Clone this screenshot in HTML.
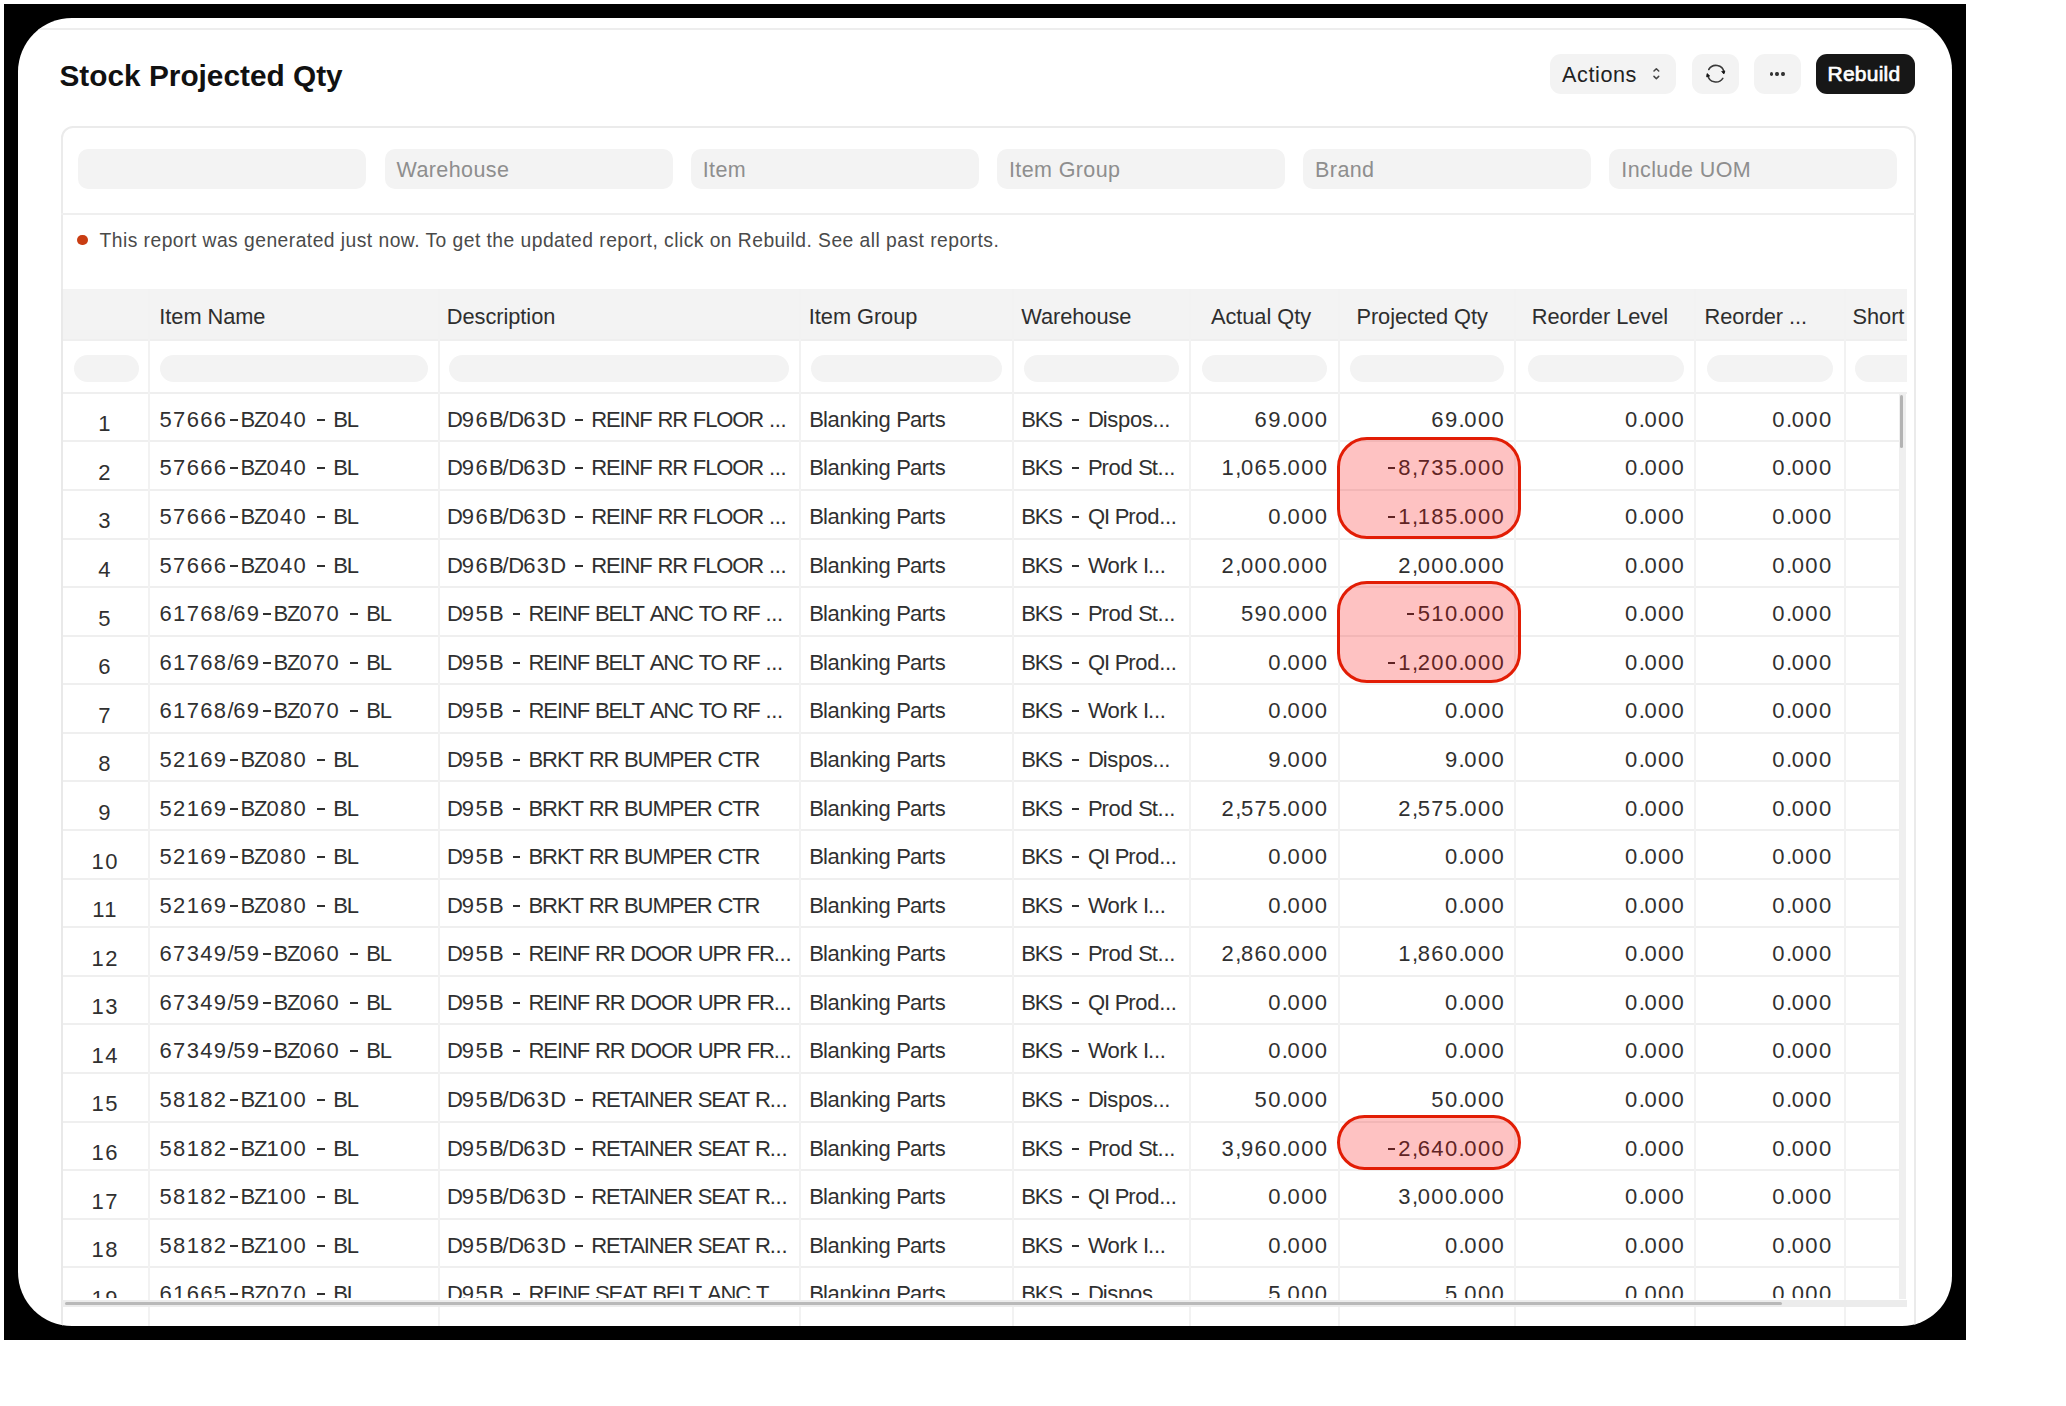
<!DOCTYPE html><html><head><meta charset="utf-8"><style>
*{margin:0;padding:0;box-sizing:border-box}
html,body{width:2066px;height:1406px;background:#fff;overflow:hidden}
body{position:relative;font-family:"Liberation Sans",sans-serif;color:#303030}
.a{position:absolute}
i{font-style:normal}
.d{letter-spacing:1.35px}
.u{letter-spacing:-1.1px}
.h{display:inline-block;width:7.8px;height:2px;background:currentColor;vertical-align:6.3px;margin:0 2.6px 0 2.7px}
.hs{display:inline-block;width:7.4px;height:2px;background:currentColor;vertical-align:6.3px;margin:0 2.7px 0 4.3px}
.m{display:inline-block;width:7px;height:2px;background:currentColor;vertical-align:6.3px;margin-right:3.3px}
.t{position:absolute;white-space:nowrap;line-height:normal;font-size:22px;letter-spacing:-0.3px}
.r{text-align:right}
.hd{position:absolute;white-space:nowrap;line-height:normal;font-size:21.8px;letter-spacing:-0.05px;color:#2e2e2e}
.vl{position:absolute;width:2px;background:#f2f2f2}
.hl{position:absolute;height:2px;background:#efefef}
.fi{position:absolute;background:#f3f3f3;border-radius:10px;height:40px;width:288px}
.fi span{position:absolute;left:12px;top:9px;font-size:21.5px;letter-spacing:0.4px;color:#8e8e8e;white-space:nowrap}
.ci{position:absolute;background:#f3f3f3;border-radius:14px;height:27px;top:355px}
.btn{position:absolute;top:53.5px;height:40.5px;background:#f3f3f3;border-radius:11px}
.box{position:absolute;border:3.6px solid #e21d05;background:rgba(250,0,0,0.24)}
</style></head><body>
<div class="a" style="left:4px;top:4px;width:1962px;height:1336px;background:#000"></div>
<div class="a" style="left:18px;top:18px;width:1934px;height:1308px;background:#fff;border-radius:54px 52px 50px 54px;overflow:hidden">
<div class="a" style="left:-18px;top:-18px;width:2066px;height:1406px">
<div class="a" style="left:0;top:28.2px;width:2066px;height:1.8px;background:#ededed"></div>
<div class="a" style="left:59.5px;top:59px;font-size:29.8px;font-weight:700;color:#111;white-space:nowrap;line-height:normal">Stock Projected Qty</div>
<div class="btn" style="left:1550px;width:126px"></div>
<div class="a" style="left:1562px;top:61.5px;font-size:21.6px;letter-spacing:0.6px;color:#222;line-height:normal;white-space:nowrap">Actions</div>
<svg class="a" style="left:1644px;top:60px" width="26" height="28" viewBox="0 0 26 28"><path d="M10.0 11.0 L12.35 8.7 L14.7 11.0 M10.0 16.4 L12.35 18.7 L14.7 16.4" fill="none" stroke="#454545" stroke-width="1.55" stroke-linecap="round" stroke-linejoin="round"/></svg>
<div class="btn" style="left:1692px;width:47px"></div>
<svg class="a" style="left:1700px;top:58px" width="32" height="32" viewBox="0 0 32 32"><path d="M8.75 11.49 A8.3 8.3 0 0 1 24.06 14.16" fill="none" stroke="#3a3a3a" stroke-width="1.6" stroke-linecap="round"/><path d="M7.75 17.28 A8.3 8.3 0 0 0 22.79 20.33" fill="none" stroke="#3a3a3a" stroke-width="1.6" stroke-linecap="round"/><path d="M21.65 13.55 L24.85 12.91 L23.89 16.03 Z" fill="#151515" stroke="#151515" stroke-width="0.8" stroke-linejoin="round"/><path d="M9.72 17.97 L6.60 18.77 L7.08 15.57 Z" fill="#151515" stroke="#151515" stroke-width="0.8" stroke-linejoin="round"/></svg>
<div class="btn" style="left:1754px;width:46.5px"></div>
<div class="a" style="left:1769.50px;top:71.9px;width:3.3px;height:3.8px;border-radius:50%;background:#333"></div>
<div class="a" style="left:1775.38px;top:71.9px;width:3.3px;height:3.8px;border-radius:50%;background:#333"></div>
<div class="a" style="left:1781.25px;top:71.9px;width:3.3px;height:3.8px;border-radius:50%;background:#333"></div>
<div class="btn" style="left:1815.6px;width:99.5px;background:#171717"></div>
<div class="a" style="left:1827.5px;top:62.2px;font-size:21px;font-weight:400;letter-spacing:0.25px;-webkit-text-stroke:0.7px #fff;color:#fff;line-height:normal;white-space:nowrap">Rebuild</div>
<div class="a" style="left:60.5px;top:126px;width:1855px;height:1260px;border:2px solid #ebebeb;border-radius:12px"></div>
<div class="fi" style="left:78.3px;top:149px"><span></span></div>
<div class="fi" style="left:384.5px;top:149px"><span>Warehouse</span></div>
<div class="fi" style="left:690.7px;top:149px"><span>Item</span></div>
<div class="fi" style="left:996.9px;top:149px"><span>Item Group</span></div>
<div class="fi" style="left:1303.1px;top:149px"><span>Brand</span></div>
<div class="fi" style="left:1609.3px;top:149px"><span>Include UOM</span></div>
<div class="hl" style="left:61px;top:212.5px;width:1854px"></div>
<div class="a" style="left:77px;top:234.5px;width:10.5px;height:10.5px;border-radius:50%;background:#c93d12"></div>
<div class="a" style="left:99.5px;top:230.1px;font-size:19.3px;letter-spacing:0.46px;color:#4a4a4a;white-space:nowrap;line-height:normal">This report was generated just now. To get the updated report, click on Rebuild. See all past reports.</div>
<div class="a" style="left:61.6px;top:288.7px;width:1845px;height:50.5px;background:#f3f3f3"></div>
<div class="hl" style="left:61.6px;top:339px;width:1845px"></div>
<div class="hl" style="left:61.6px;top:391.5px;width:1845px"></div>
<div class="hl" style="left:61.6px;top:440.38px;width:1838px"></div>
<div class="hl" style="left:61.6px;top:488.96px;width:1838px"></div>
<div class="hl" style="left:61.6px;top:537.54px;width:1838px"></div>
<div class="hl" style="left:61.6px;top:586.12px;width:1838px"></div>
<div class="hl" style="left:61.6px;top:634.70px;width:1838px"></div>
<div class="hl" style="left:61.6px;top:683.28px;width:1838px"></div>
<div class="hl" style="left:61.6px;top:731.86px;width:1838px"></div>
<div class="hl" style="left:61.6px;top:780.44px;width:1838px"></div>
<div class="hl" style="left:61.6px;top:829.02px;width:1838px"></div>
<div class="hl" style="left:61.6px;top:877.60px;width:1838px"></div>
<div class="hl" style="left:61.6px;top:926.18px;width:1838px"></div>
<div class="hl" style="left:61.6px;top:974.76px;width:1838px"></div>
<div class="hl" style="left:61.6px;top:1023.34px;width:1838px"></div>
<div class="hl" style="left:61.6px;top:1071.92px;width:1838px"></div>
<div class="hl" style="left:61.6px;top:1120.50px;width:1838px"></div>
<div class="hl" style="left:61.6px;top:1169.08px;width:1838px"></div>
<div class="hl" style="left:61.6px;top:1217.66px;width:1838px"></div>
<div class="hl" style="left:61.6px;top:1266.24px;width:1838px"></div>
<div class="vl" style="left:60.60px;top:288.7px;height:1040px;background:#e9e9e9"></div>
<div class="vl" style="left:147.70px;top:288.7px;height:1040px"></div>
<div class="vl" style="left:437.60px;top:288.7px;height:1040px"></div>
<div class="vl" style="left:799.20px;top:288.7px;height:1040px"></div>
<div class="vl" style="left:1011.50px;top:288.7px;height:1040px"></div>
<div class="vl" style="left:1189.40px;top:288.7px;height:1040px"></div>
<div class="vl" style="left:1337.70px;top:288.7px;height:1040px"></div>
<div class="vl" style="left:1514.30px;top:288.7px;height:1040px"></div>
<div class="vl" style="left:1694.40px;top:288.7px;height:1040px"></div>
<div class="vl" style="left:1843.70px;top:288.7px;height:1040px"></div>
<div class="a" style="left:0;top:0;width:1906.5px;height:1406px;overflow:hidden">
<div class="hd" style="left:159.3px;top:304.3px">Item Name</div>
<div class="hd" style="left:446.8px;top:304.3px">Description</div>
<div class="hd" style="left:808.8px;top:304.3px">Item Group</div>
<div class="hd" style="left:1021.2px;top:304.3px">Warehouse</div>
<div class="hd r" style="right:595.5px;top:304.3px">Actual Qty</div>
<div class="hd r" style="right:418.7px;top:304.3px">Projected Qty</div>
<div class="hd r" style="right:238.5px;top:304.3px">Reorder Level</div>
<div class="hd" style="left:1704.6px;top:304.3px">Reorder ...</div>
<div class="hd" style="left:1852.5px;top:304.3px">Short</div>
</div>
<div class="a" style="left:0;top:0;width:1906.5px;height:1406px;overflow:hidden">
<div class="ci" style="left:73.8px;width:64.8px"></div>
<div class="ci" style="left:160px;width:267.6px"></div>
<div class="ci" style="left:449.4px;width:339.6px"></div>
<div class="ci" style="left:811.4px;width:190.4px"></div>
<div class="ci" style="left:1023.7px;width:155.5px"></div>
<div class="ci" style="left:1201.7px;width:125.7px"></div>
<div class="ci" style="left:1350.3px;width:154.0px"></div>
<div class="ci" style="left:1527.5px;width:156.3px"></div>
<div class="ci" style="left:1707px;width:125.5px"></div>
<div class="ci" style="left:1855px;width:65.0px"></div>
</div>
<div class="a" style="left:0;top:393px;width:1898px;height:905px;overflow:hidden">
<div class="t" style="left:61.6px;width:87.1px;text-align:center;top:18.00px"><i class="d">1</i></div>
<div class="t" style="left:159.5px;top:14.00px"><i class="d">57666</i><i class="h"></i><i class="u">BZ</i><i class="d">040</i> <i class="hs"></i> <i class="u">BL</i></div>
<div class="t" style="left:447px;top:14.00px"><i class="u">D</i><i class="d">96</i><i class="u">B</i>/<i class="u">D</i><i class="d">63</i><i class="u">D</i> <i class="hs"></i> <i class="u">REINF</i> <i class="u">RR</i> <i class="u">FLOOR</i> ...</div>
<div class="t" style="left:809.3px;top:14.00px"><i class="u">B</i>lanking <i class="u">P</i>arts</div>
<div class="t" style="left:1021.2px;top:14.00px"><i class="u">BKS</i> <i class="hs"></i> <i class="u">D</i>ispos...</div>
<div class="t r" style="right:569.7px;top:14.00px"><i class="d">69</i>.<i class="d">000</i></div>
<div class="t r" style="right:392.9px;top:14.00px"><i class="d">69</i>.<i class="d">000</i></div>
<div class="t r" style="right:212.8px;top:14.00px"><i class="d">0</i>.<i class="d">000</i></div>
<div class="t r" style="right:65.5px;top:14.00px"><i class="d">0</i>.<i class="d">000</i></div>
<div class="t" style="left:61.6px;width:87.1px;text-align:center;top:67.00px"><i class="d">2</i></div>
<div class="t" style="left:159.5px;top:62.00px"><i class="d">57666</i><i class="h"></i><i class="u">BZ</i><i class="d">040</i> <i class="hs"></i> <i class="u">BL</i></div>
<div class="t" style="left:447px;top:62.00px"><i class="u">D</i><i class="d">96</i><i class="u">B</i>/<i class="u">D</i><i class="d">63</i><i class="u">D</i> <i class="hs"></i> <i class="u">REINF</i> <i class="u">RR</i> <i class="u">FLOOR</i> ...</div>
<div class="t" style="left:809.3px;top:62.00px"><i class="u">B</i>lanking <i class="u">P</i>arts</div>
<div class="t" style="left:1021.2px;top:62.00px"><i class="u">BKS</i> <i class="hs"></i> <i class="u">P</i>rod <i class="u">S</i>t...</div>
<div class="t r" style="right:569.7px;top:62.00px"><i class="d">1</i>,<i class="d">065</i>.<i class="d">000</i></div>
<div class="t r" style="right:392.9px;top:62.00px"><i class="m"></i><i class="d">8</i>,<i class="d">735</i>.<i class="d">000</i></div>
<div class="t r" style="right:212.8px;top:62.00px"><i class="d">0</i>.<i class="d">000</i></div>
<div class="t r" style="right:65.5px;top:62.00px"><i class="d">0</i>.<i class="d">000</i></div>
<div class="t" style="left:61.6px;width:87.1px;text-align:center;top:115.00px"><i class="d">3</i></div>
<div class="t" style="left:159.5px;top:111.00px"><i class="d">57666</i><i class="h"></i><i class="u">BZ</i><i class="d">040</i> <i class="hs"></i> <i class="u">BL</i></div>
<div class="t" style="left:447px;top:111.00px"><i class="u">D</i><i class="d">96</i><i class="u">B</i>/<i class="u">D</i><i class="d">63</i><i class="u">D</i> <i class="hs"></i> <i class="u">REINF</i> <i class="u">RR</i> <i class="u">FLOOR</i> ...</div>
<div class="t" style="left:809.3px;top:111.00px"><i class="u">B</i>lanking <i class="u">P</i>arts</div>
<div class="t" style="left:1021.2px;top:111.00px"><i class="u">BKS</i> <i class="hs"></i> <i class="u">QI</i> <i class="u">P</i>rod...</div>
<div class="t r" style="right:569.7px;top:111.00px"><i class="d">0</i>.<i class="d">000</i></div>
<div class="t r" style="right:392.9px;top:111.00px"><i class="m"></i><i class="d">1</i>,<i class="d">185</i>.<i class="d">000</i></div>
<div class="t r" style="right:212.8px;top:111.00px"><i class="d">0</i>.<i class="d">000</i></div>
<div class="t r" style="right:65.5px;top:111.00px"><i class="d">0</i>.<i class="d">000</i></div>
<div class="t" style="left:61.6px;width:87.1px;text-align:center;top:164.00px"><i class="d">4</i></div>
<div class="t" style="left:159.5px;top:160.00px"><i class="d">57666</i><i class="h"></i><i class="u">BZ</i><i class="d">040</i> <i class="hs"></i> <i class="u">BL</i></div>
<div class="t" style="left:447px;top:160.00px"><i class="u">D</i><i class="d">96</i><i class="u">B</i>/<i class="u">D</i><i class="d">63</i><i class="u">D</i> <i class="hs"></i> <i class="u">REINF</i> <i class="u">RR</i> <i class="u">FLOOR</i> ...</div>
<div class="t" style="left:809.3px;top:160.00px"><i class="u">B</i>lanking <i class="u">P</i>arts</div>
<div class="t" style="left:1021.2px;top:160.00px"><i class="u">BKS</i> <i class="hs"></i> <i class="u">W</i>ork <i class="u">I</i>...</div>
<div class="t r" style="right:569.7px;top:160.00px"><i class="d">2</i>,<i class="d">000</i>.<i class="d">000</i></div>
<div class="t r" style="right:392.9px;top:160.00px"><i class="d">2</i>,<i class="d">000</i>.<i class="d">000</i></div>
<div class="t r" style="right:212.8px;top:160.00px"><i class="d">0</i>.<i class="d">000</i></div>
<div class="t r" style="right:65.5px;top:160.00px"><i class="d">0</i>.<i class="d">000</i></div>
<div class="t" style="left:61.6px;width:87.1px;text-align:center;top:213.00px"><i class="d">5</i></div>
<div class="t" style="left:159.5px;top:208.00px"><i class="d">61768</i>/<i class="d">69</i><i class="h"></i><i class="u">BZ</i><i class="d">070</i> <i class="hs"></i> <i class="u">BL</i></div>
<div class="t" style="left:447px;top:208.00px"><i class="u">D</i><i class="d">95</i><i class="u">B</i> <i class="hs"></i> <i class="u">REINF</i> <i class="u">BELT</i> <i class="u">ANC</i> <i class="u">TO</i> <i class="u">RF</i> ...</div>
<div class="t" style="left:809.3px;top:208.00px"><i class="u">B</i>lanking <i class="u">P</i>arts</div>
<div class="t" style="left:1021.2px;top:208.00px"><i class="u">BKS</i> <i class="hs"></i> <i class="u">P</i>rod <i class="u">S</i>t...</div>
<div class="t r" style="right:569.7px;top:208.00px"><i class="d">590</i>.<i class="d">000</i></div>
<div class="t r" style="right:392.9px;top:208.00px"><i class="m"></i><i class="d">510</i>.<i class="d">000</i></div>
<div class="t r" style="right:212.8px;top:208.00px"><i class="d">0</i>.<i class="d">000</i></div>
<div class="t r" style="right:65.5px;top:208.00px"><i class="d">0</i>.<i class="d">000</i></div>
<div class="t" style="left:61.6px;width:87.1px;text-align:center;top:261.00px"><i class="d">6</i></div>
<div class="t" style="left:159.5px;top:257.00px"><i class="d">61768</i>/<i class="d">69</i><i class="h"></i><i class="u">BZ</i><i class="d">070</i> <i class="hs"></i> <i class="u">BL</i></div>
<div class="t" style="left:447px;top:257.00px"><i class="u">D</i><i class="d">95</i><i class="u">B</i> <i class="hs"></i> <i class="u">REINF</i> <i class="u">BELT</i> <i class="u">ANC</i> <i class="u">TO</i> <i class="u">RF</i> ...</div>
<div class="t" style="left:809.3px;top:257.00px"><i class="u">B</i>lanking <i class="u">P</i>arts</div>
<div class="t" style="left:1021.2px;top:257.00px"><i class="u">BKS</i> <i class="hs"></i> <i class="u">QI</i> <i class="u">P</i>rod...</div>
<div class="t r" style="right:569.7px;top:257.00px"><i class="d">0</i>.<i class="d">000</i></div>
<div class="t r" style="right:392.9px;top:257.00px"><i class="m"></i><i class="d">1</i>,<i class="d">200</i>.<i class="d">000</i></div>
<div class="t r" style="right:212.8px;top:257.00px"><i class="d">0</i>.<i class="d">000</i></div>
<div class="t r" style="right:65.5px;top:257.00px"><i class="d">0</i>.<i class="d">000</i></div>
<div class="t" style="left:61.6px;width:87.1px;text-align:center;top:310.00px"><i class="d">7</i></div>
<div class="t" style="left:159.5px;top:305.00px"><i class="d">61768</i>/<i class="d">69</i><i class="h"></i><i class="u">BZ</i><i class="d">070</i> <i class="hs"></i> <i class="u">BL</i></div>
<div class="t" style="left:447px;top:305.00px"><i class="u">D</i><i class="d">95</i><i class="u">B</i> <i class="hs"></i> <i class="u">REINF</i> <i class="u">BELT</i> <i class="u">ANC</i> <i class="u">TO</i> <i class="u">RF</i> ...</div>
<div class="t" style="left:809.3px;top:305.00px"><i class="u">B</i>lanking <i class="u">P</i>arts</div>
<div class="t" style="left:1021.2px;top:305.00px"><i class="u">BKS</i> <i class="hs"></i> <i class="u">W</i>ork <i class="u">I</i>...</div>
<div class="t r" style="right:569.7px;top:305.00px"><i class="d">0</i>.<i class="d">000</i></div>
<div class="t r" style="right:392.9px;top:305.00px"><i class="d">0</i>.<i class="d">000</i></div>
<div class="t r" style="right:212.8px;top:305.00px"><i class="d">0</i>.<i class="d">000</i></div>
<div class="t r" style="right:65.5px;top:305.00px"><i class="d">0</i>.<i class="d">000</i></div>
<div class="t" style="left:61.6px;width:87.1px;text-align:center;top:358.00px"><i class="d">8</i></div>
<div class="t" style="left:159.5px;top:354.00px"><i class="d">52169</i><i class="h"></i><i class="u">BZ</i><i class="d">080</i> <i class="hs"></i> <i class="u">BL</i></div>
<div class="t" style="left:447px;top:354.00px"><i class="u">D</i><i class="d">95</i><i class="u">B</i> <i class="hs"></i> <i class="u">BRKT</i> <i class="u">RR</i> <i class="u">BUMPER</i> <i class="u">CTR</i></div>
<div class="t" style="left:809.3px;top:354.00px"><i class="u">B</i>lanking <i class="u">P</i>arts</div>
<div class="t" style="left:1021.2px;top:354.00px"><i class="u">BKS</i> <i class="hs"></i> <i class="u">D</i>ispos...</div>
<div class="t r" style="right:569.7px;top:354.00px"><i class="d">9</i>.<i class="d">000</i></div>
<div class="t r" style="right:392.9px;top:354.00px"><i class="d">9</i>.<i class="d">000</i></div>
<div class="t r" style="right:212.8px;top:354.00px"><i class="d">0</i>.<i class="d">000</i></div>
<div class="t r" style="right:65.5px;top:354.00px"><i class="d">0</i>.<i class="d">000</i></div>
<div class="t" style="left:61.6px;width:87.1px;text-align:center;top:407.00px"><i class="d">9</i></div>
<div class="t" style="left:159.5px;top:403.00px"><i class="d">52169</i><i class="h"></i><i class="u">BZ</i><i class="d">080</i> <i class="hs"></i> <i class="u">BL</i></div>
<div class="t" style="left:447px;top:403.00px"><i class="u">D</i><i class="d">95</i><i class="u">B</i> <i class="hs"></i> <i class="u">BRKT</i> <i class="u">RR</i> <i class="u">BUMPER</i> <i class="u">CTR</i></div>
<div class="t" style="left:809.3px;top:403.00px"><i class="u">B</i>lanking <i class="u">P</i>arts</div>
<div class="t" style="left:1021.2px;top:403.00px"><i class="u">BKS</i> <i class="hs"></i> <i class="u">P</i>rod <i class="u">S</i>t...</div>
<div class="t r" style="right:569.7px;top:403.00px"><i class="d">2</i>,<i class="d">575</i>.<i class="d">000</i></div>
<div class="t r" style="right:392.9px;top:403.00px"><i class="d">2</i>,<i class="d">575</i>.<i class="d">000</i></div>
<div class="t r" style="right:212.8px;top:403.00px"><i class="d">0</i>.<i class="d">000</i></div>
<div class="t r" style="right:65.5px;top:403.00px"><i class="d">0</i>.<i class="d">000</i></div>
<div class="t" style="left:61.6px;width:87.1px;text-align:center;top:456.00px"><i class="d">10</i></div>
<div class="t" style="left:159.5px;top:451.00px"><i class="d">52169</i><i class="h"></i><i class="u">BZ</i><i class="d">080</i> <i class="hs"></i> <i class="u">BL</i></div>
<div class="t" style="left:447px;top:451.00px"><i class="u">D</i><i class="d">95</i><i class="u">B</i> <i class="hs"></i> <i class="u">BRKT</i> <i class="u">RR</i> <i class="u">BUMPER</i> <i class="u">CTR</i></div>
<div class="t" style="left:809.3px;top:451.00px"><i class="u">B</i>lanking <i class="u">P</i>arts</div>
<div class="t" style="left:1021.2px;top:451.00px"><i class="u">BKS</i> <i class="hs"></i> <i class="u">QI</i> <i class="u">P</i>rod...</div>
<div class="t r" style="right:569.7px;top:451.00px"><i class="d">0</i>.<i class="d">000</i></div>
<div class="t r" style="right:392.9px;top:451.00px"><i class="d">0</i>.<i class="d">000</i></div>
<div class="t r" style="right:212.8px;top:451.00px"><i class="d">0</i>.<i class="d">000</i></div>
<div class="t r" style="right:65.5px;top:451.00px"><i class="d">0</i>.<i class="d">000</i></div>
<div class="t" style="left:61.6px;width:87.1px;text-align:center;top:504.00px"><i class="d">11</i></div>
<div class="t" style="left:159.5px;top:500.00px"><i class="d">52169</i><i class="h"></i><i class="u">BZ</i><i class="d">080</i> <i class="hs"></i> <i class="u">BL</i></div>
<div class="t" style="left:447px;top:500.00px"><i class="u">D</i><i class="d">95</i><i class="u">B</i> <i class="hs"></i> <i class="u">BRKT</i> <i class="u">RR</i> <i class="u">BUMPER</i> <i class="u">CTR</i></div>
<div class="t" style="left:809.3px;top:500.00px"><i class="u">B</i>lanking <i class="u">P</i>arts</div>
<div class="t" style="left:1021.2px;top:500.00px"><i class="u">BKS</i> <i class="hs"></i> <i class="u">W</i>ork <i class="u">I</i>...</div>
<div class="t r" style="right:569.7px;top:500.00px"><i class="d">0</i>.<i class="d">000</i></div>
<div class="t r" style="right:392.9px;top:500.00px"><i class="d">0</i>.<i class="d">000</i></div>
<div class="t r" style="right:212.8px;top:500.00px"><i class="d">0</i>.<i class="d">000</i></div>
<div class="t r" style="right:65.5px;top:500.00px"><i class="d">0</i>.<i class="d">000</i></div>
<div class="t" style="left:61.6px;width:87.1px;text-align:center;top:553.00px"><i class="d">12</i></div>
<div class="t" style="left:159.5px;top:548.00px"><i class="d">67349</i>/<i class="d">59</i><i class="h"></i><i class="u">BZ</i><i class="d">060</i> <i class="hs"></i> <i class="u">BL</i></div>
<div class="t" style="left:447px;top:548.00px"><i class="u">D</i><i class="d">95</i><i class="u">B</i> <i class="hs"></i> <i class="u">REINF</i> <i class="u">RR</i> <i class="u">DOOR</i> <i class="u">UPR</i> <i class="u">FR</i>...</div>
<div class="t" style="left:809.3px;top:548.00px"><i class="u">B</i>lanking <i class="u">P</i>arts</div>
<div class="t" style="left:1021.2px;top:548.00px"><i class="u">BKS</i> <i class="hs"></i> <i class="u">P</i>rod <i class="u">S</i>t...</div>
<div class="t r" style="right:569.7px;top:548.00px"><i class="d">2</i>,<i class="d">860</i>.<i class="d">000</i></div>
<div class="t r" style="right:392.9px;top:548.00px"><i class="d">1</i>,<i class="d">860</i>.<i class="d">000</i></div>
<div class="t r" style="right:212.8px;top:548.00px"><i class="d">0</i>.<i class="d">000</i></div>
<div class="t r" style="right:65.5px;top:548.00px"><i class="d">0</i>.<i class="d">000</i></div>
<div class="t" style="left:61.6px;width:87.1px;text-align:center;top:601.00px"><i class="d">13</i></div>
<div class="t" style="left:159.5px;top:597.00px"><i class="d">67349</i>/<i class="d">59</i><i class="h"></i><i class="u">BZ</i><i class="d">060</i> <i class="hs"></i> <i class="u">BL</i></div>
<div class="t" style="left:447px;top:597.00px"><i class="u">D</i><i class="d">95</i><i class="u">B</i> <i class="hs"></i> <i class="u">REINF</i> <i class="u">RR</i> <i class="u">DOOR</i> <i class="u">UPR</i> <i class="u">FR</i>...</div>
<div class="t" style="left:809.3px;top:597.00px"><i class="u">B</i>lanking <i class="u">P</i>arts</div>
<div class="t" style="left:1021.2px;top:597.00px"><i class="u">BKS</i> <i class="hs"></i> <i class="u">QI</i> <i class="u">P</i>rod...</div>
<div class="t r" style="right:569.7px;top:597.00px"><i class="d">0</i>.<i class="d">000</i></div>
<div class="t r" style="right:392.9px;top:597.00px"><i class="d">0</i>.<i class="d">000</i></div>
<div class="t r" style="right:212.8px;top:597.00px"><i class="d">0</i>.<i class="d">000</i></div>
<div class="t r" style="right:65.5px;top:597.00px"><i class="d">0</i>.<i class="d">000</i></div>
<div class="t" style="left:61.6px;width:87.1px;text-align:center;top:650.00px"><i class="d">14</i></div>
<div class="t" style="left:159.5px;top:645.00px"><i class="d">67349</i>/<i class="d">59</i><i class="h"></i><i class="u">BZ</i><i class="d">060</i> <i class="hs"></i> <i class="u">BL</i></div>
<div class="t" style="left:447px;top:645.00px"><i class="u">D</i><i class="d">95</i><i class="u">B</i> <i class="hs"></i> <i class="u">REINF</i> <i class="u">RR</i> <i class="u">DOOR</i> <i class="u">UPR</i> <i class="u">FR</i>...</div>
<div class="t" style="left:809.3px;top:645.00px"><i class="u">B</i>lanking <i class="u">P</i>arts</div>
<div class="t" style="left:1021.2px;top:645.00px"><i class="u">BKS</i> <i class="hs"></i> <i class="u">W</i>ork <i class="u">I</i>...</div>
<div class="t r" style="right:569.7px;top:645.00px"><i class="d">0</i>.<i class="d">000</i></div>
<div class="t r" style="right:392.9px;top:645.00px"><i class="d">0</i>.<i class="d">000</i></div>
<div class="t r" style="right:212.8px;top:645.00px"><i class="d">0</i>.<i class="d">000</i></div>
<div class="t r" style="right:65.5px;top:645.00px"><i class="d">0</i>.<i class="d">000</i></div>
<div class="t" style="left:61.6px;width:87.1px;text-align:center;top:698.00px"><i class="d">15</i></div>
<div class="t" style="left:159.5px;top:694.00px"><i class="d">58182</i><i class="h"></i><i class="u">BZ</i><i class="d">100</i> <i class="hs"></i> <i class="u">BL</i></div>
<div class="t" style="left:447px;top:694.00px"><i class="u">D</i><i class="d">95</i><i class="u">B</i>/<i class="u">D</i><i class="d">63</i><i class="u">D</i> <i class="hs"></i> <i class="u">RETAINER</i> <i class="u">SEAT</i> <i class="u">R</i>...</div>
<div class="t" style="left:809.3px;top:694.00px"><i class="u">B</i>lanking <i class="u">P</i>arts</div>
<div class="t" style="left:1021.2px;top:694.00px"><i class="u">BKS</i> <i class="hs"></i> <i class="u">D</i>ispos...</div>
<div class="t r" style="right:569.7px;top:694.00px"><i class="d">50</i>.<i class="d">000</i></div>
<div class="t r" style="right:392.9px;top:694.00px"><i class="d">50</i>.<i class="d">000</i></div>
<div class="t r" style="right:212.8px;top:694.00px"><i class="d">0</i>.<i class="d">000</i></div>
<div class="t r" style="right:65.5px;top:694.00px"><i class="d">0</i>.<i class="d">000</i></div>
<div class="t" style="left:61.6px;width:87.1px;text-align:center;top:747.00px"><i class="d">16</i></div>
<div class="t" style="left:159.5px;top:743.00px"><i class="d">58182</i><i class="h"></i><i class="u">BZ</i><i class="d">100</i> <i class="hs"></i> <i class="u">BL</i></div>
<div class="t" style="left:447px;top:743.00px"><i class="u">D</i><i class="d">95</i><i class="u">B</i>/<i class="u">D</i><i class="d">63</i><i class="u">D</i> <i class="hs"></i> <i class="u">RETAINER</i> <i class="u">SEAT</i> <i class="u">R</i>...</div>
<div class="t" style="left:809.3px;top:743.00px"><i class="u">B</i>lanking <i class="u">P</i>arts</div>
<div class="t" style="left:1021.2px;top:743.00px"><i class="u">BKS</i> <i class="hs"></i> <i class="u">P</i>rod <i class="u">S</i>t...</div>
<div class="t r" style="right:569.7px;top:743.00px"><i class="d">3</i>,<i class="d">960</i>.<i class="d">000</i></div>
<div class="t r" style="right:392.9px;top:743.00px"><i class="m"></i><i class="d">2</i>,<i class="d">640</i>.<i class="d">000</i></div>
<div class="t r" style="right:212.8px;top:743.00px"><i class="d">0</i>.<i class="d">000</i></div>
<div class="t r" style="right:65.5px;top:743.00px"><i class="d">0</i>.<i class="d">000</i></div>
<div class="t" style="left:61.6px;width:87.1px;text-align:center;top:796.00px"><i class="d">17</i></div>
<div class="t" style="left:159.5px;top:791.00px"><i class="d">58182</i><i class="h"></i><i class="u">BZ</i><i class="d">100</i> <i class="hs"></i> <i class="u">BL</i></div>
<div class="t" style="left:447px;top:791.00px"><i class="u">D</i><i class="d">95</i><i class="u">B</i>/<i class="u">D</i><i class="d">63</i><i class="u">D</i> <i class="hs"></i> <i class="u">RETAINER</i> <i class="u">SEAT</i> <i class="u">R</i>...</div>
<div class="t" style="left:809.3px;top:791.00px"><i class="u">B</i>lanking <i class="u">P</i>arts</div>
<div class="t" style="left:1021.2px;top:791.00px"><i class="u">BKS</i> <i class="hs"></i> <i class="u">QI</i> <i class="u">P</i>rod...</div>
<div class="t r" style="right:569.7px;top:791.00px"><i class="d">0</i>.<i class="d">000</i></div>
<div class="t r" style="right:392.9px;top:791.00px"><i class="d">3</i>,<i class="d">000</i>.<i class="d">000</i></div>
<div class="t r" style="right:212.8px;top:791.00px"><i class="d">0</i>.<i class="d">000</i></div>
<div class="t r" style="right:65.5px;top:791.00px"><i class="d">0</i>.<i class="d">000</i></div>
<div class="t" style="left:61.6px;width:87.1px;text-align:center;top:844.00px"><i class="d">18</i></div>
<div class="t" style="left:159.5px;top:840.00px"><i class="d">58182</i><i class="h"></i><i class="u">BZ</i><i class="d">100</i> <i class="hs"></i> <i class="u">BL</i></div>
<div class="t" style="left:447px;top:840.00px"><i class="u">D</i><i class="d">95</i><i class="u">B</i>/<i class="u">D</i><i class="d">63</i><i class="u">D</i> <i class="hs"></i> <i class="u">RETAINER</i> <i class="u">SEAT</i> <i class="u">R</i>...</div>
<div class="t" style="left:809.3px;top:840.00px"><i class="u">B</i>lanking <i class="u">P</i>arts</div>
<div class="t" style="left:1021.2px;top:840.00px"><i class="u">BKS</i> <i class="hs"></i> <i class="u">W</i>ork <i class="u">I</i>...</div>
<div class="t r" style="right:569.7px;top:840.00px"><i class="d">0</i>.<i class="d">000</i></div>
<div class="t r" style="right:392.9px;top:840.00px"><i class="d">0</i>.<i class="d">000</i></div>
<div class="t r" style="right:212.8px;top:840.00px"><i class="d">0</i>.<i class="d">000</i></div>
<div class="t r" style="right:65.5px;top:840.00px"><i class="d">0</i>.<i class="d">000</i></div>
<div class="t" style="left:61.6px;width:87.1px;text-align:center;top:893.00px"><i class="d">19</i></div>
<div class="t" style="left:159.5px;top:888.00px"><i class="d">61665</i><i class="h"></i><i class="u">BZ</i><i class="d">070</i> <i class="hs"></i> <i class="u">BL</i></div>
<div class="t" style="left:447px;top:888.00px"><i class="u">D</i><i class="d">95</i><i class="u">B</i> <i class="hs"></i> <i class="u">REINF</i> <i class="u">SEAT</i> <i class="u">BELT</i> <i class="u">ANC</i> <i class="u">T</i>...</div>
<div class="t" style="left:809.3px;top:888.00px"><i class="u">B</i>lanking <i class="u">P</i>arts</div>
<div class="t" style="left:1021.2px;top:888.00px"><i class="u">BKS</i> <i class="hs"></i> <i class="u">D</i>ispos...</div>
<div class="t r" style="right:569.7px;top:888.00px"><i class="d">5</i>.<i class="d">000</i></div>
<div class="t r" style="right:392.9px;top:888.00px"><i class="d">5</i>.<i class="d">000</i></div>
<div class="t r" style="right:212.8px;top:888.00px"><i class="d">0</i>.<i class="d">000</i></div>
<div class="t r" style="right:65.5px;top:888.00px"><i class="d">0</i>.<i class="d">000</i></div>
</div>
<div class="a" style="left:1899px;top:393px;width:7px;height:906px;background:#efefef"></div>
<div class="a" style="left:1900.2px;top:395.4px;width:3.2px;height:53px;border-radius:2px;background:#b3b3b3"></div>
<div class="a" style="left:61.6px;top:1299.5px;width:1845px;height:7.5px;background:#ececec"></div>
<div class="a" style="left:64.5px;top:1301.6px;width:1717px;height:3.9px;border-radius:2px;background:#b9b9b9"></div>
<div class="box" style="left:1336.5px;top:436.5px;width:184.8px;height:102.8px;border-radius:30px"></div>
<div class="box" style="left:1337px;top:580.6px;width:184.3px;height:102.8px;border-radius:30px"></div>
<div class="box" style="left:1336.5px;top:1114.9px;width:184.8px;height:55.4px;border-radius:27.7px"></div>
</div></div>
</body></html>
